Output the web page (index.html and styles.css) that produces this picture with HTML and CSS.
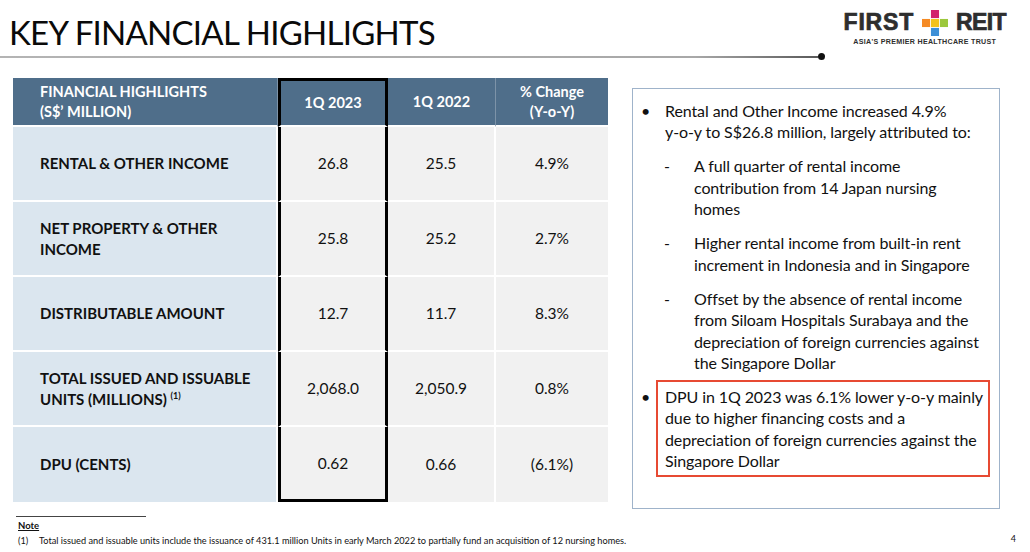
FILE: index.html
```html
<!DOCTYPE html>
<html>
<head>
<meta charset="utf-8">
<link rel="stylesheet" href="styles.css">
</head>
<body>
<div class="slide">
  <header class="top">
    <h1 class="title">KEY FINANCIAL HIGHLIGHTS</h1>
    <div class="logo">
      <div class="logo-row">
        <span class="logo-word first-word">FIRST</span>
        <svg class="cross" width="26" height="26" viewBox="0 0 27 27">
          <rect x="9.3" y="0" width="8.4" height="8.4" fill="#d21f6c"/>
          <rect x="0" y="9.3" width="8.4" height="8.4" fill="#f58a24"/>
          <rect x="18.6" y="9.3" width="8.4" height="8.4" fill="#9cc83c"/>
          <rect x="9.3" y="9.3" width="8.4" height="8.4" fill="#f4c21c"/>
          <rect x="9.3" y="18.6" width="8.4" height="8.4" fill="#3d8fd6"/>
        </svg>
        <span class="logo-word reit-word">REIT</span>
      </div>
      <div class="logo-tag">ASIA'S PREMIER HEALTHCARE TRUST</div>
    </div>
  </header>
  <div class="rule"><span class="rule-line"></span><span class="rule-dot"></span></div>

  <main class="content">
    <table class="fin">
      <thead>
        <tr>
          <th class="c1">FINANCIAL HIGHLIGHTS<br>(S$’ MILLION)</th>
          <th class="hl">1Q 2023</th>
          <th>1Q 2022</th>
          <th class="last">% Change<br>(Y-o-Y)</th>
        </tr>
      </thead>
      <tbody>
        <tr>
          <td class="c1">RENTAL &amp; OTHER INCOME</td>
          <td class="hl">26.8</td><td>25.5</td><td class="last">4.9%</td>
        </tr>
        <tr>
          <td class="c1">NET PROPERTY &amp; OTHER<br>INCOME</td>
          <td class="hl">25.8</td><td>25.2</td><td class="last">2.7%</td>
        </tr>
        <tr>
          <td class="c1">DISTRIBUTABLE AMOUNT</td>
          <td class="hl">12.7</td><td>11.7</td><td class="last">8.3%</td>
        </tr>
        <tr>
          <td class="c1">TOTAL ISSUED AND ISSUABLE<br>UNITS (MILLIONS) <sup>(1)</sup></td>
          <td class="hl">2,068.0</td><td>2,050.9</td><td class="last">0.8%</td>
        </tr>
        <tr class="lastrow">
          <td class="c1">DPU (CENTS)</td>
          <td class="hl">0.62</td><td>0.66</td><td class="last">(6.1%)</td>
        </tr>
      </tbody>
    </table>

    <aside class="panel">
      <div class="item first">
        <span class="bullet">•</span>
        <div class="txt">Rental and Other Income increased 4.9%<br>y-o-y to S$26.8 million, largely attributed to:</div>
      </div>
      <div class="sub">
        <span class="dash">-</span>
        <div class="txt">A full quarter of rental income<br>contribution from 14 Japan nursing<br>homes</div>
      </div>
      <div class="sub">
        <span class="dash">-</span>
        <div class="txt">Higher rental income from built-in rent<br>increment in Indonesia and in Singapore</div>
      </div>
      <div class="sub">
        <span class="dash">-</span>
        <div class="txt">Offset by the absence of rental income<br>from Siloam Hospitals Surabaya and the<br>depreciation of foreign currencies against<br>the Singapore Dollar</div>
      </div>
      <div class="item item2">
        <span class="bullet">•</span>
        <div class="txt redbox">DPU in 1Q 2023 was 6.1% lower y-o-y mainly<br>due to higher financing costs and a<br>depreciation of foreign currencies against the<br>Singapore Dollar</div>
      </div>
    </aside>
  </main>

  <footer class="foot">
    <div class="notes">
      <div class="note-rule"></div>
      <div class="note-title">Note</div>
      <div class="note-line"><span class="note-num">(1)</span>Total issued and issuable units include the issuance of 431.1 million Units in early March 2022 to partially fund an acquisition of 12 nursing homes.</div>
    </div>
    <div class="page">4</div>
  </footer>
</div>
</body>
</html>
```

FILE: styles.css
```css
* { box-sizing: border-box; }
html, body { margin: 0; padding: 0; background: #fff; }
body {
  font-family: Lato, "Open Sans", "Liberation Sans", sans-serif;
  color: #111;
}
.slide {
  width: 1030px;
  height: 552px;
  overflow: hidden;
}
.top {
  display: flex;
  justify-content: space-between;
  align-items: flex-start;
  height: 52px;
}
.title {
  margin: 12px 0 0 9px;
  font-weight: 400;
  font-size: 33px;
  line-height: 40px;
  letter-spacing: -0.75px;
  color: #0a0a0a;
}
.logo {
  margin: 9px 24px 0 0;
  display: flex;
  flex-direction: column;
  align-items: center;
}
.logo-row {
  display: flex;
  align-items: center;
  gap: 8px;
}
.logo-word {
  font-family: "Liberation Sans", Arial, sans-serif;
  font-weight: 700;
  font-size: 23px;
  line-height: 27px;
  color: #2e2e2e;
  -webkit-text-stroke: 0.7px #2e2e2e;
}
.first-word { letter-spacing: 0.8px; }
.reit-word { letter-spacing: -0.6px; }
.cross { display: block; }
.logo-tag {
  font-family: "Liberation Sans", Arial, sans-serif;
  font-weight: 700;
  font-size: 7.1px;
  letter-spacing: 0.3px;
  color: #2e2e2e;
  margin-top: 2px;
}
.rule {
  display: flex;
  align-items: center;
  height: 9px;
  width: 825px;
}
.rule-line {
  flex: 1;
  height: 2px;
  background: linear-gradient(to right, #b4b4b4 0%, #a8a8a8 85%, #5a5a5a 100%);
}
.rule-dot {
  width: 7px;
  height: 7px;
  border-radius: 50%;
  background: #111;
}
.content {
  display: flex;
  align-items: flex-start;
  margin-top: 17px;
  height: 430px;
}
.fin {
  margin-left: 13px;
  border-collapse: separate;
  border-spacing: 0;
  width: 595px;
  table-layout: fixed;
}
.fin th {
  background: #4f6e8a;
  color: #fff;
  font-weight: 700;
  font-size: 14.5px;
  line-height: 20px;
  height: 49px;
  text-align: center;
  vertical-align: middle;
  padding: 0;
  border-right: 1px solid #7d93a8;
  border-bottom: 2px solid #fff;
}
.fin th.c1 { text-align: left; padding-left: 27px; width: 265px; }
.fin th.hl { width: 110px; }
.fin th:nth-child(3) { width: 108px; }
.fin th.last { border-right: none; width: 112px; }
.fin td {
  background: #f1f1f1;
  font-size: 15.5px;
  line-height: 21px;
  height: 75px;
  text-align: center;
  vertical-align: middle;
  padding: 0;
  border-right: 2px solid #fff;
  border-bottom: 2px solid #fff;
  color: #111;
}
.fin td.c1 {
  background: #dbe6ef;
  text-align: left;
  padding-left: 27px;
  font-weight: 700;
  font-size: 15px;
}
.fin td.last { border-right: none; }
.fin tr.lastrow td { border-bottom: none; }
.fin sup { font-size: 9px; vertical-align: 6px; line-height: 0; font-weight: 700; }
.fin .hl {
  border-left: 3px solid #000;
  border-right: 3px solid #000;
}
.fin th.hl { border-top: 3px solid #000; }
.fin tr.lastrow td.hl { border-bottom: 3px solid #000; }

.panel {
  margin: 10px 0 0 24px;
  width: 368px;
  height: 421px;
  border: 1.5px solid #9fb3ca;
  padding: 0 0 0 8px;
  font-size: 16px;
  line-height: 21.5px;
  letter-spacing: -0.1px;
  color: #111;
}
.txt { white-space: nowrap; }
.item, .sub {
  display: flex;
  margin-top: 12.5px;
}
.item.first { margin-top: 10.5px; }
.bullet { width: 24px; flex: none; }
.sub { padding-left: 23px; }
.dash { width: 30px; flex: none; }
.item2 { margin-top: 6px; }
.redbox {
  margin-left: -9px;
  border: 2px solid #e74a33;
  padding: 4px 2px 3px 7px;
  width: 334px;
}
.item2 .bullet { padding-top: 6px; }

.foot {
  display: flex;
  justify-content: space-between;
  align-items: flex-end;
  margin-top: 8px;
}
.notes { padding-left: 16px; }
.note-rule { width: 130px; height: 1px; background: #444; }
.note-title {
  font-size: 9.5px;
  font-weight: 700;
  text-decoration: underline;
  margin: 3px 0 0 2px;
  line-height: 12px;
}
.note-line {
  font-size: 9.2px;
  line-height: 12px;
  margin: 3px 0 0 2px;
  display: flex;
  white-space: nowrap;
}
.note-num { width: 21px; flex: none; }
.page {
  font-size: 9px;
  margin: 0 14px 3px 0;
}
```
